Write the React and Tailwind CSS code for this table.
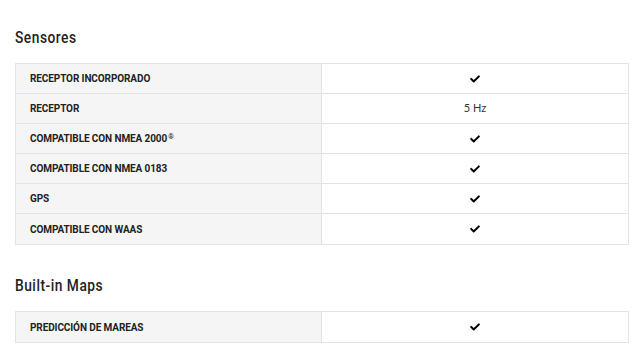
import React from 'react';
import { FaCheck } from 'react-icons/fa';

const sections = [
  {
    title: 'Sensores',
    rows: [
      { label: 'RECEPTOR INCORPORADO', value: true },
      { label: 'RECEPTOR', value: '5 Hz' },
      { label: 'COMPATIBLE CON NMEA 2000', sup: '®', value: true },
      { label: 'COMPATIBLE CON NMEA 0183', value: true },
      { label: 'GPS', value: true },
      { label: 'COMPATIBLE CON WAAS', value: true },
    ],
  },
  {
    title: 'Built-in Maps',
    rows: [{ label: 'PREDICCIÓN DE MAREAS', value: true }],
  },
];

const SpecRow = ({ row }) => (
  <div className="grid grid-cols-2 border-b border-[#e3e3e3] last:border-b-0 h-[30px]">
    <div className="bg-[#f5f5f5] border-r border-[#e3e3e3] flex items-center pl-[14px]">
      <span className="font-['Roboto',sans-serif] font-bold text-[10px] tracking-[-0.1px] text-[#222]">
        {row.label}
        {row.sup && <sup className="text-[7px] ml-[1px]">{row.sup}</sup>}
      </span>
    </div>
    <div className="bg-white flex items-center justify-center">
      {row.value === true ? (
        <FaCheck className="w-[12px] h-[10px] text-black" />
      ) : (
        <span className="font-['Lato',sans-serif] text-[11px] text-[#333]">{row.value}</span>
      )}
    </div>
  </div>
);

export default function App() {
  return (
    <div className="w-[640px] h-[355px] bg-white overflow-hidden px-[15px] pt-[28px]">
      {sections.map((section) => (
        <div key={section.title} className="mb-[31px]">
          <h3 className="font-['Roboto',sans-serif] font-medium text-[16px] leading-[20px] tracking-[0.6px] text-[#222] mb-[15px]">
            <span className="inline-block origin-left scale-x-[0.86]">{section.title}</span>
          </h3>
          <div className="border border-[#e3e3e3] w-[614px]">
            {section.rows.map((row) => (
              <SpecRow key={row.label} row={row} />
            ))}
          </div>
        </div>
      ))}
    </div>
  );
}
